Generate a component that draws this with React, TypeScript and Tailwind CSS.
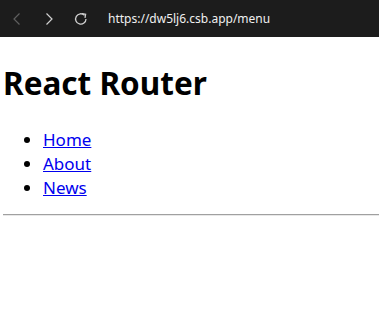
import React from "react";

export default function App() {
  return (
    <div className="w-[379px] h-[327px] bg-white overflow-hidden" style={{ fontFamily: '"Noto Sans", "Open Sans", sans-serif' }}>
      <div className="h-[37px] bg-[#1c1c1c] flex items-center">
        <svg className="ml-[12px]" width="10" height="14" viewBox="0 0 10 14" fill="none">
          <path d="M7.5 1.5 L2 7 L7.5 12.5" stroke="#5f5f5f" strokeWidth="1.2" />
        </svg>
        <svg className="ml-[22px]" width="10" height="14" viewBox="0 0 10 14" fill="none">
          <path d="M2.5 1.5 L8 7 L2.5 12.5" stroke="#d0d0d0" strokeWidth="1.2" />
        </svg>
        <svg className="ml-[19px]" width="16" height="16" viewBox="0 0 16 16" fill="none">
          <path d="M13 8 A5.2 5.2 0 1 1 11.5 4.3" stroke="#d0d0d0" strokeWidth="1.3" />
          <path d="M9 2.6 L12.6 3.2 L12 6.8" stroke="#d0d0d0" strokeWidth="1.3" fill="none" />
        </svg>
        <span className="ml-[19px] text-[12px] text-[#f0f0f0]" style={{ fontFamily: '"Noto Sans", sans-serif' }}>
          https://dw5lj6.csb.app/menu
        </span>
      </div>
      <div className="px-[3px]">
        <h1 className="text-[31.5px] font-bold text-black leading-[40px] mt-[26px]">React Router</h1>
        <ul className="list-disc pl-[40px] mt-[25px] text-[17px] leading-[24px]">
          <li>
            <a href="#" className="text-[#0000ee] underline">Home</a>
          </li>
          <li>
            <a href="#" className="text-[#0000ee] underline">About</a>
          </li>
          <li>
            <a href="#" className="text-[#0000ee] underline">News</a>
          </li>
        </ul>
        <hr className="mt-[14px] -mr-[3px] border-t border-t-[#a0a0a0] border-b border-b-[#e8e8e8]" />
      </div>
    </div>
  );
}
